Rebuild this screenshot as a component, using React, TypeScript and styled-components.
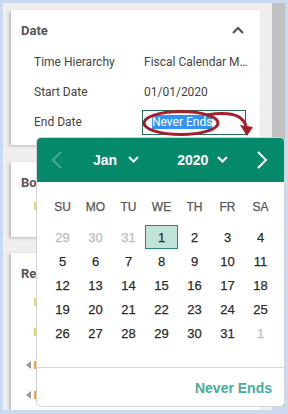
import { createGlobalStyle, styled } from "styled-components";

const GlobalStyle = createGlobalStyle`
  html, body {
    margin: 0;
    padding: 0;
    background: #c9daf1;
  }
  * {
    box-sizing: border-box;
  }
`;

const Frame = styled.div`
  position: relative;
  width: 282px;
  height: 407px;
  margin: 3px 0 0 3px;
  display: flex;
  font-family: Roboto, "Liberation Sans", sans-serif;
`;

const Main = styled.div`
  flex: 1;
  overflow: hidden;
  background: #efefef;
  padding: 7px 12px 0 8px;
  display: flex;
  flex-direction: column;
  gap: 17px;
`;

const Scrollbar = styled.div`
  width: 13px;
  background: #c1c1c1;
  margin-bottom: 4px;
`;

const Card = styled.section<{ $h: number; $gap?: number }>`
  flex: none;
  height: ${(p) => p.$h}px;
  background: #fff;
  box-shadow: -2px 1px 3px rgba(0, 0, 0, 0.22);
  padding: 10px 14px 0 10px;
  margin-top: ${(p) => (p.$gap ? p.$gap - 17 : 0)}px;
`;

const CardHead = styled.div`
  display: flex;
  align-items: center;
  justify-content: space-between;
  height: 20px;
  margin-bottom: 7px;
  font-size: 13px;
  font-weight: 700;
  color: #555;
`;

const Row = styled.div`
  display: flex;
  align-items: center;
  height: 30px;
  padding-left: 13px;
  font-size: 12px;
  color: #444;
`;

const Label = styled.div`
  width: 110px;
  flex: none;
`;

const Value = styled.div`
  width: 108px;
  margin-right: -6px;
  white-space: nowrap;
  overflow: hidden;
  text-overflow: ellipsis;
`;

const DateInput = styled.div`
  width: 108px;
  height: 25px;
  margin-left: -2px;
  border: 1px solid #2b6e59;
  display: flex;
  align-items: center;
  padding-left: 9px;
`;

const Selected = styled.span`
  background: #3393f3;
  color: #fff;
  line-height: 14px;
`;

const ListItem = styled.div<{ $h: number; $mt?: number }>`
  display: flex;
  align-items: center;
  height: ${(p) => p.$h}px;
  margin-top: ${(p) => p.$mt ?? 0}px;
  padding-left: 5px;
  gap: 2px;
`;

const Caret = styled.span`
  width: 0;
  height: 0;
  border-top: 4px solid transparent;
  border-bottom: 4px solid transparent;
  border-right: 5px solid #9a9a9a;
`;

const Dot = styled.span<{ $c: string }>`
  width: 8px;
  height: 8px;
  margin-left: ${(p) => (p.$c === "#f2d06b" ? 8 : 1)}px;
  background: ${(p) => p.$c};
`;

/* ---- date picker popup ---- */

const Picker = styled.div`
  position: absolute;
  left: 33px;
  top: 134px;
  width: 249px;
  height: 270px;
  background: #fff;
  border: 1px solid #d4d4d4;
  border-radius: 5px;
  overflow: hidden;
  font-family: "Liberation Sans", Arial, sans-serif;
  z-index: 2;
`;

const PickerHead = styled.div`
  height: 45px;
  margin: -1px -1px 0 -1px;
  background: #05896b;
  color: #fff;
  display: flex;
  align-items: center;
  font-size: 14px;
  font-weight: 700;
`;

const NavBtn = styled.div<{ $w: number; $right?: boolean }>`
  flex: none;
  width: ${(p) => p.$w}px;
  margin-left: ${(p) => (p.$right ? "auto" : "0")};
  display: flex;
  justify-content: center;
  align-items: center;
`;

const Select = styled.div<{ $ml: number; $gap: number }>`
  flex: none;
  display: flex;
  align-items: center;
  gap: ${(p) => p.$gap}px;
  margin-left: ${(p) => p.$ml}px;
`;

const Grid = styled.div<{ $mt: number; $mb?: number }>`
  display: grid;
  grid-template-columns: repeat(7, 33px);
  margin: ${(p) => p.$mt}px 0 ${(p) => p.$mb ?? 0}px 9px;
  -webkit-text-stroke: 0.25px currentColor;
`;

const WeekDay = styled.div`
  height: 24px;
  display: flex;
  align-items: center;
  justify-content: center;
  font-size: 12px;
  color: #555;
`;

const Day = styled.div<{ $muted?: boolean; $active?: boolean }>`
  height: 24px;
  display: flex;
  align-items: center;
  justify-content: center;
  font-size: 13px;
  color: ${(p) => (p.$muted ? "#bbb" : "#2b2b2b")};
  background: ${(p) => (p.$active ? "#c2e3d9" : "transparent")};
  border: 1px solid ${(p) => (p.$active ? "#2b8a6c" : "transparent")};
`;

const Footer = styled.div`
  border-top: 1px solid #d8d8d8;
  height: 40px;
  display: flex;
  align-items: center;
  justify-content: flex-end;
  padding-right: 12px;
  font-size: 14px;
  font-weight: 700;
  color: #4aab98;
`;

const Markup = styled.svg`
  position: absolute;
  left: -3px;
  top: -3px;
  z-index: 3;
  pointer-events: none;
`;

const Chevron = ({ dir, color }: { dir: "left" | "right"; color: string }) => (
  <svg width="12" height="20" viewBox="0 0 12 20">
    <path
      d={dir === "left" ? "M10 2 L2 10 L10 18" : "M2 2 L10 10 L2 18"}
      fill="none"
      stroke={color}
      strokeWidth="2"
    />
  </svg>
);

const Down = () => (
  <svg width="11" height="7" viewBox="0 0 11 7">
    <path d="M1 1 L5.5 5.5 L10 1" fill="none" stroke="#fff" strokeWidth="2" />
  </svg>
);

const Up = () => (
  <svg width="12" height="8" viewBox="0 0 12 8" style={{ marginRight: 2 }}>
    <path d="M1 7 L6 2 L11 7" fill="none" stroke="#555" strokeWidth="2.2" />
  </svg>
);

const weekdays = ["SU", "MO", "TU", "WE", "TH", "FR", "SA"];
const days = [
  ...[29, 30, 31].map((d) => ({ d, muted: true })),
  ...Array.from({ length: 31 }, (_, i) => ({ d: i + 1, muted: false })),
  { d: 1, muted: true },
];

export default function App() {
  return (
    <>
      <GlobalStyle />
      <Frame>
        <Main>
          <Card $h={135}>
            <CardHead>
              Date
              <Up />
            </CardHead>
            <Row>
              <Label>Time Hierarchy</Label>
              <Value>Fiscal Calendar Monthly</Value>
            </Row>
            <Row>
              <Label>Start Date</Label>
              <Value>01/01/2020</Value>
            </Row>
            <Row>
              <Label>End Date</Label>
              <DateInput>
                <Selected>Never Ends</Selected>
              </DateInput>
            </Row>
          </Card>
          <Card $h={75}>
            <CardHead>Bo</CardHead>
            <ListItem $h={12} $mt={8}>
              <Dot $c="#f2d06b" />
            </ListItem>
          </Card>
          <Card $h={200} $gap={16}>
            <CardHead>Re</CardHead>
            <ListItem $h={24} $mt={4}>
              <Dot $c="#f2d06b" />
            </ListItem>
            <ListItem $h={36}>
              <Dot $c="#f2d06b" />
            </ListItem>
            <ListItem $h={30}>
              <Caret />
              <Dot $c="#f0a640" />
            </ListItem>
            <ListItem $h={30}>
              <Caret />
              <Dot $c="#f0a640" />
            </ListItem>
          </Card>
        </Main>
        <Scrollbar />

        <Picker>
          <PickerHead>
            <NavBtn $w={42}>
              <Chevron dir="left" color="#4aa88e" />
            </NavBtn>
            <Select $ml={15} $gap={11}>
              Jan
              <Down />
            </Select>
            <Select $ml={38} $gap={9}>
              2020
              <Down />
            </Select>
            <NavBtn $w={46} $right>
              <Chevron dir="right" color="#fff" />
            </NavBtn>
          </PickerHead>
          <Grid $mt={13}>
            {weekdays.map((w) => (
              <WeekDay key={w}>{w}</WeekDay>
            ))}
          </Grid>
          <Grid $mt={6} $mb={22}>
            {days.map((x, i) => (
              <Day key={i} $muted={x.muted} $active={i === 3}>
                {x.d}
              </Day>
            ))}
          </Grid>
          <Footer>Never Ends</Footer>
        </Picker>

        <Markup width="288" height="414" viewBox="0 0 288 414">
          <ellipse
            cx="181"
            cy="123"
            rx="37"
            ry="11.5"
            fill="none"
            stroke="#a3202a"
            strokeWidth="3"
          />
          <path
            d="M207 115 C225 112, 242 113, 246 126"
            fill="none"
            stroke="#a3202a"
            strokeWidth="3"
          />
          <polygon points="240,125 253,127 247,136" fill="#a3202a" />
        </Markup>
      </Frame>
    </>
  );
}
